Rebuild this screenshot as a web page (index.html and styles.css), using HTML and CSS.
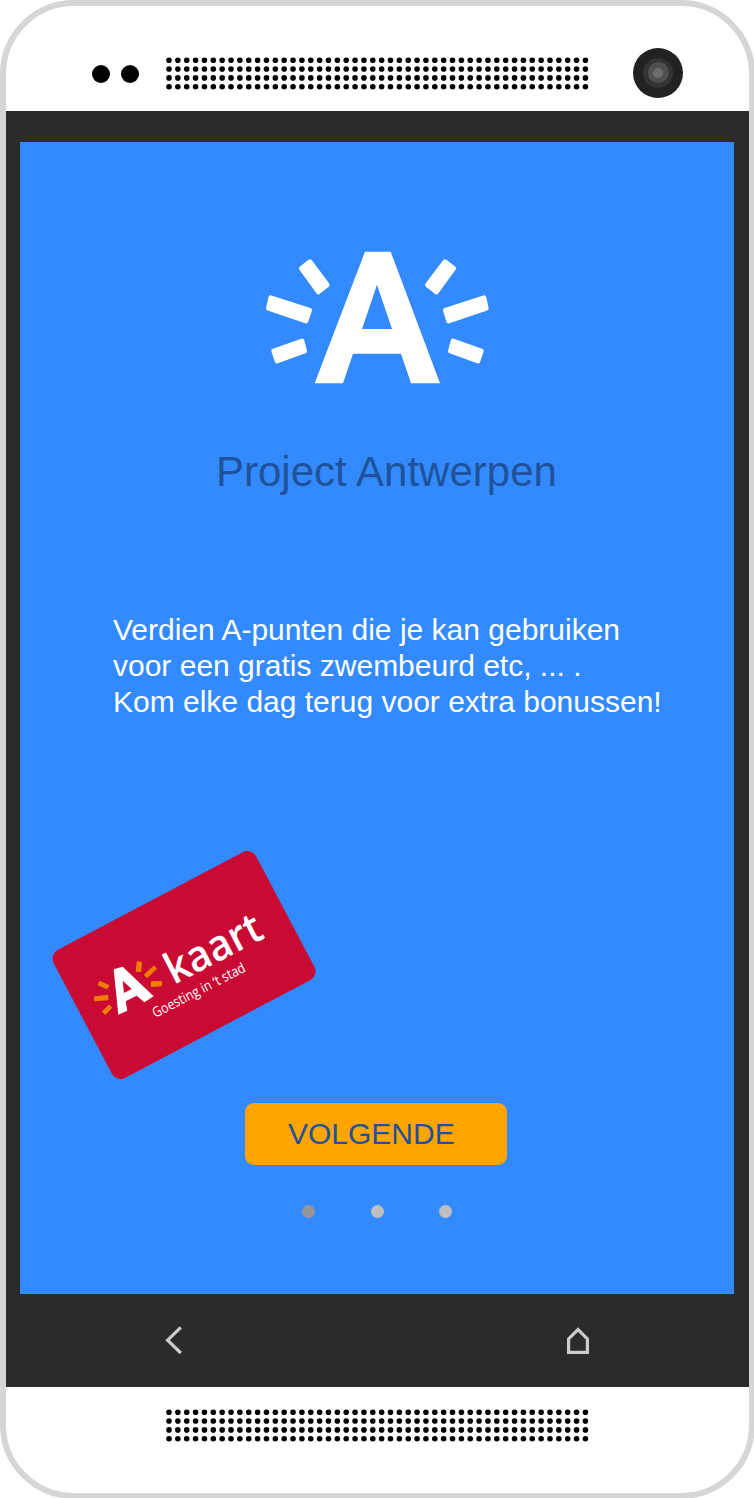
FILE: index.html
```
<!DOCTYPE html>
<html lang="nl">
<head>
<meta charset="utf-8">
<title>Project Antwerpen</title>
<link rel="stylesheet" href="styles.css">
</head>
<body>
<div class="phone">
  <header class="phone-top">
    <div class="sensors"><span class="sensor"></span><span class="sensor"></span></div>
    <svg class="speaker" width="424" height="34" viewBox="0 0 424 34">
      <path d="M3 3.2H420M3 12.05H420M3 20.9H420M3 29.75H420"/>
    </svg>
    <svg class="camera" width="50" height="50" viewBox="0 0 50 50">
      <circle cx="25" cy="25" r="25" fill="#222"/>
      <circle cx="25" cy="25" r="15" fill="#333"/>
      <circle cx="25.3" cy="24.5" r="10.5" fill="#505050"/>
      <circle cx="25" cy="25" r="5" fill="#6c6c6c"/>
    </svg>
  </header>

  <div class="bezel">
    <main class="screen">
      <svg class="logo" width="250" height="155" viewBox="0 0 750 465" fill="#fff">
        <path fill-rule="evenodd" d="M330 35H407L555 430H468L438 341H294L264 430H179ZM366 134L321 267H411Z"/>
        <g stroke="#fff" stroke-width="14" stroke-linejoin="round">
          <path d="M139 85L165 65L217 135L190 156Z"/>
          <path d="M47 173L164 211L153 243L40 205Z"/>
          <path d="M56 333L141 303L149 333L66 363Z"/>
          <path d="M570 65L596 85L544 156L517 135Z"/>
          <path d="M687 173L571 211L581 243L694 205Z"/>
          <path d="M594 303L679 333L669 363L586 333Z"/>
        </g>
      </svg>
      <h1 class="title">Project Antwerpen</h1>
      <p class="intro">Verdien A-punten die je kan gebruiken<br>voor een gratis zwembeurd etc, ... .<br>Kom elke dag terug voor extra bonussen!</p>
      <svg class="card" width="290" height="250" viewBox="0 0 870 750">
        <rect x="88.5" y="158" width="687" height="434" rx="30" fill="#c90a33" transform="rotate(-27.8 432 375)"/>
        <path fill="#fff" fill-rule="evenodd" d="M221 388L248 380L341 469L313 487L290 467L257 484L262 512L235 524ZM248 422L252 459L275 447Z"/>
        <g fill="#f07d00" stroke="#f07d00" stroke-width="4" stroke-linejoin="round">
          <path d="M292 366L304 367L302 394L289 393Z"/>
          <path d="M342 379L349 386L321 412L314 404Z"/>
          <path d="M335 426L364 425L364 437L335 439Z"/>
          <path d="M180 425L206 437L200 446L175 434Z"/>
          <path d="M164 471L203 466L203 479L164 482Z"/>
          <path d="M207 496L214 503L196 522L188 515Z"/>
        </g>
        <text class="card-name" transform="translate(401 435) rotate(-27.3)" textLength="312" lengthAdjust="spacingAndGlyphs">kaart</text>
        <text class="card-slogan" transform="translate(346 534) rotate(-27.3)" textLength="308" lengthAdjust="spacingAndGlyphs">Goesting in ‘t stad</text>
      </svg>
      <button class="next" type="button">VOLGENDE</button>
      <div class="pager">
        <span class="page-dot current"></span><span class="page-dot"></span><span class="page-dot"></span>
      </div>
    </main>
    <nav class="navbar">
      <svg width="20" height="32" viewBox="0 0 20 32" fill="none" stroke="#ccc" stroke-width="3.2">
        <path d="M17.8 3.3L4.6 16.2L17.8 29"/>
      </svg>
      <svg width="26" height="30" viewBox="0 0 26 30" fill="none" stroke="#ccc" stroke-width="3.2">
        <path d="M3.6 27.4V13.8L13 4.5L22.4 13.8V27.4Z"/>
      </svg>
    </nav>
  </div>

  <footer class="phone-bottom">
    <svg class="speaker" width="424" height="34" viewBox="0 0 424 34">
      <path d="M3 3.2H420M3 12.05H420M3 20.9H420M3 29.75H420"/>
    </svg>
  </footer>
</div>
</body>
</html>
```
FILE: styles.css
```
* { box-sizing: border-box; }

html, body { overflow: hidden; }

body {
  margin: 0;
  background: #fff;
  font-family: "Liberation Sans", Arial, sans-serif;
}

svg { display: block; flex: none; }

.phone {
  width: 755px;
  height: 1499px;
  border: 6px solid #d6d6d6;
  border-radius: 74px;
  background: #fff;
  display: flex;
  flex-direction: column;
}

.phone-top {
  height: 105px;
  padding: 42px 0 0 86px;
  display: flex;
  align-items: flex-start;
}

.sensors {
  display: flex;
  gap: 11px;
  padding-top: 17px;
  margin-right: 27px;
}

.sensor {
  width: 18px;
  height: 18px;
  border-radius: 50%;
  background: #000;
}

/* Zero-length dashes with round caps draw the grille holes */
.speaker {
  fill: none;
  stroke: #000;
  stroke-width: 5.6;
  stroke-linecap: round;
  stroke-dasharray: 0 8.86;
}

.phone-top .speaker { margin-top: 8.5px; }

.camera { margin-left: 43px; }

.bezel {
  height: 1276px;
  padding: 31px 15px 0 14px;
  background: #2b2b2b;
}

.screen {
  height: 1152px;
  padding-top: 98px;
  background: #338aff;
}

.logo { margin-left: 235px; }

.title {
  margin: 53px 0 0 196px;
  font-size: 42px;
  line-height: 48px;
  font-weight: 400;
  color: #1f5299;
  white-space: nowrap;
}

.intro {
  margin: 116px 0 0 93px;
  font-size: 30px;
  line-height: 36px;
  color: #fff;
  white-space: nowrap;
}

.card {
  margin: 120px 0 0 20px;
  fill: #fff;
  font-family: "Open Sans", "Noto Sans", sans-serif;
}

.card-name { font-size: 128px; font-weight: 600; }

.card-slogan { font-size: 42px; }

.next {
  display: block;
  width: 262px;
  height: 62px;
  margin: 13px 0 0 225px;
  padding: 0 0 1px 43px;
  border: 0;
  border-radius: 9px;
  background: #ffa500;
  color: #1f5299;
  font: 30px/61px "Liberation Sans", Arial, sans-serif;
  text-align: left;
}

.pager {
  display: flex;
  gap: 55.5px;
  padding: 40px 0 0 282.4px;
}

.page-dot {
  width: 13px;
  height: 13px;
  border-radius: 50%;
  background: #bfbfbf;
}

.page-dot.current { background: #969696; }

.navbar {
  height: 91px;
  display: flex;
  align-items: center;
  justify-content: space-between;
  padding: 0 143px 0 143px;
}

.phone-bottom { padding: 21.5px 0 0 160px; }
```
